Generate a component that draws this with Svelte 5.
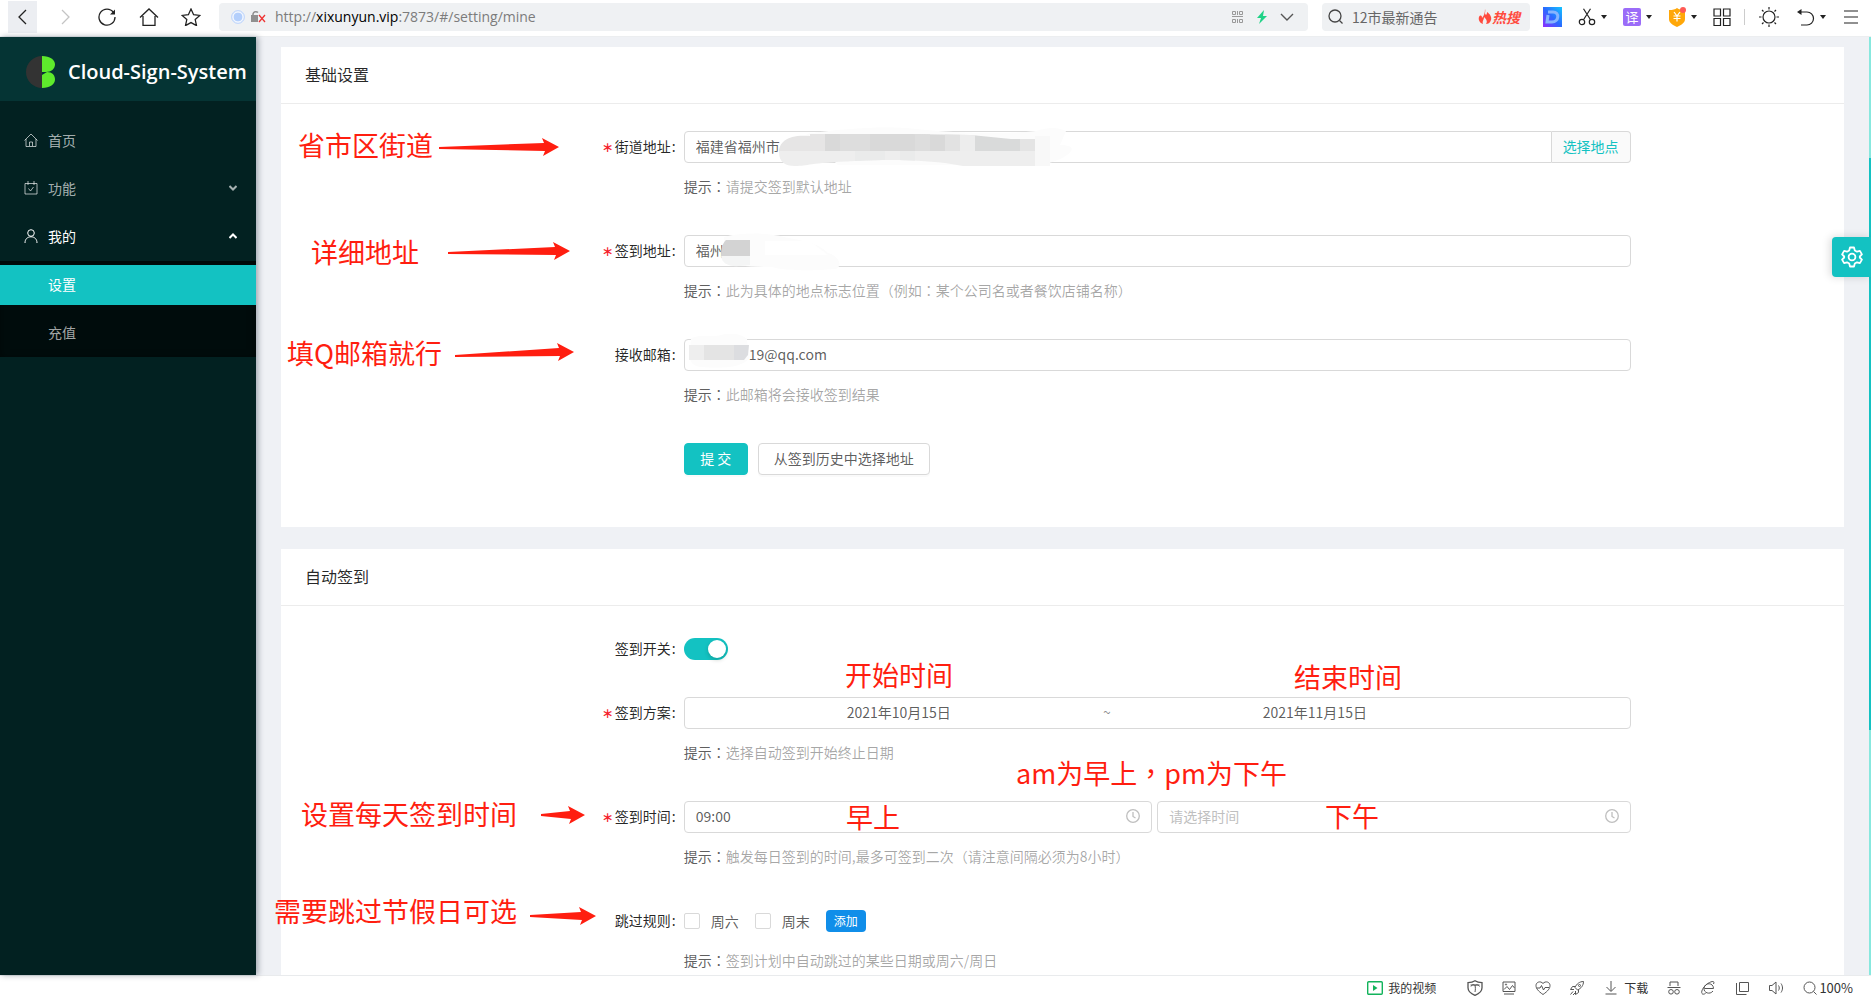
<script>
  let street = "福建省福州市";
  let place = "福州";
  let email = "19@qq.com";
  let enabled = true;
  let startDate = "2021年10月15日";
  let endDate = "2021年11月15日";
  let amTime = "09:00";
  let pmTime = "";
  let skipSat = false;
  let skipSun = false;
  let keyword = "";

  // positions are relative to the page area, beside and over the forms
  const notes = [
    { text: "省市区街道", x: 42, y: 90 },
    { text: "详细地址", x: 55, y: 197 },
    { text: "填Q邮箱就行", x: 31, y: 298 },
    { text: "开始时间", x: 589, y: 620 },
    { text: "结束时间", x: 1038, y: 622 },
    { text: "am为早上，pm为下午", x: 760, y: 718 },
    { text: "早上", x: 590, y: 762 },
    { text: "下午", x: 1069, y: 761 },
    { text: "设置每天签到时间", x: 45, y: 759 },
    { text: "需要跳过节假日可选", x: 18, y: 856 },
  ];

  const arrows = [
    { x: 183, y: 111, len: 120, dy: -1 },
    { x: 192, y: 216, len: 122, dy: -2 },
    { x: 199, y: 319, len: 119, dy: -4 },
    { x: 285, y: 778, len: 44, dy: 0 },
    { x: 274, y: 879, len: 66, dy: 0 },
  ];

  const arrowPath = ({ x, y, len, dy }) => {
    const tip = x + len;
    const ty = y + dy;
    return `M${x} ${y - 1} L${tip - 15} ${ty - 4} L${tip - 17} ${ty - 9} L${tip} ${ty} L${tip - 16} ${ty + 9} L${tip - 14} ${ty + 4} L${x} ${y + 1}Z`;
  };
</script>

<div class="browser">
  <header class="topbar">
    <nav class="nav" aria-label="浏览">
      <button class="nav-btn back" aria-label="后退">
        <svg width="18" height="18" viewBox="0 0 18 18"><path d="M12 2 5 9l7 7" /></svg>
      </button>
      <button class="nav-btn dim" aria-label="前进">
        <svg width="18" height="18" viewBox="0 0 18 18"><path d="m6 2 7 7-7 7" /></svg>
      </button>
      <button class="nav-btn" aria-label="刷新">
        <svg width="20" height="18" viewBox="0 0 20 18">
          <path d="M16.500 4.500A8 8 0 1 0 18 9" />
          <path d="M18 1.500v5h-5z" fill="#222" stroke="none" />
        </svg>
      </button>
      <button class="nav-btn" aria-label="主页">
        <svg width="20" height="18" viewBox="0 0 20 18"><path d="M1 9.500 10 1l9 8.500M4 8v9.500h12V8" /></svg>
      </button>
      <button class="nav-btn" aria-label="收藏">
        <svg width="20" height="18" viewBox="0 0 20 18">
          <path d="m10 1 2.600 5.700 6.200.700-4.600 4.200 1.300 6L10 14.600 4.500 17.600l1.300-6L1.200 7.400l6.200-.700z" />
        </svg>
      </button>
    </nav>
    <div class="address">
      <svg class="site" width="14" height="14" viewBox="0 0 14 14">
        <circle cx="7" cy="7" r="6.500" fill="#d6e5fd" stroke="#c4d8fa" />
        <circle cx="7" cy="7" r="5" fill="#b3cffc" stroke="#fff" />
      </svg>
      <svg class="lock" width="15" height="14" viewBox="0 0 15 14">
        <path d="M2 6V4a3 3 0 0 1 5-1.500" fill="none" stroke="#909090" stroke-width="1.500" />
        <path d="M0 5h7v7H0z" fill="#909090" />
        <path d="m8 5 6 7m0-7-6 7" stroke="#e33" stroke-width="1.300" />
      </svg>
      <p class="url">http://<b>xixunyun.vip</b>:7873/#/setting/mine</p>
      <svg width="12" height="12" viewBox="0 0 12 12" fill="none" stroke="#999">
        <path d="M.5.500h3v3h-3zM7.500.500h3v3h-3zM.5 8.500h3v3h-3zM7.500 8.500h3v3h-3zM5.500 0v4M0 5.500h11M5.500 8v4" />
      </svg>
      <svg width="12" height="14" viewBox="0 0 12 14"><path d="M8 0 1 8h4l-2 6 8-8H7z" fill="#1fd286" /></svg>
      <svg width="14" height="14" viewBox="0 0 14 14" fill="none" stroke="#555" stroke-width="1.400"><path d="m1 4 6 6 6-6" /></svg>
    </div>
    <div class="search">
      <svg width="16" height="16" viewBox="0 0 16 16" fill="none" stroke="#444" stroke-width="1.300">
        <circle cx="7" cy="7" r="6" /><path d="m11.500 11.500 3 3" />
      </svg>
      <input aria-label="搜索" placeholder="12市最新通告" bind:value={keyword} />
      <svg width="14" height="16" viewBox="0 0 14 16">
        <path d="M7 0c1 3-1 4 1 6 1-1 1-2 1-3 3 2 5 5 4 8s-3 4-5 4c2-3 0-5-2-7 0 3-2 4-1 7-3-1-5-4-4-7C2 6 4 6 4 9c2-2 3-5 3-9z" fill="#ff4b3e" />
      </svg>
      <strong>热搜</strong>
    </div>
    <div class="tools">
      <button class="tool" aria-label="文档">
        <svg width="19" height="20" viewBox="0 0 19 20">
          <defs>
            <linearGradient id="doc" x1="0" y1="1" x2="1" y2="0">
              <stop offset="0" stop-color="#8f2cff" /><stop offset=".5" stop-color="#2a6bff" /><stop offset="1" stop-color="#14c4ff" />
            </linearGradient>
          </defs>
          <path d="M0 0h19v20H0z" fill="url(#doc)" />
          <path d="M5 5h5c7 0 6 10-1 10H4l1-7" fill="none" stroke="#86b4ff" stroke-width="3" />
        </svg>
      </button>
      <button class="tool" aria-label="截图">
        <svg width="18" height="18" viewBox="0 0 18 18" fill="none" stroke="#222" stroke-width="1.200">
          <circle cx="4" cy="14" r="2.700" /><circle cx="14" cy="14" r="2.700" /><path d="m5.500 11.800 7-11M12.500 11.800l-7-11" />
        </svg>
        <i class="caret"></i>
      </button>
      <button class="tool" aria-label="翻译">
        <span class="translate">译</span>
        <i class="caret"></i>
      </button>
      <button class="tool" aria-label="优惠">
        <svg width="18" height="20" viewBox="0 0 18 20">
          <path d="M9 1c2 1.500 4 2 8 2v9c0 4-4 6-8 8-4-2-8-4-8-8V3c4 0 6-.5 8-2z" fill="#ffa708" />
          <path d="m6 5 3 4 3-4M5.500 9h7M5.500 11.500h7M9 9v5.500" fill="none" stroke="#fff" stroke-width="1.200" />
          <circle cx="15" cy="3" r="3" fill="#ff5a55" />
        </svg>
        <i class="caret"></i>
      </button>
      <button class="tool" aria-label="应用">
        <svg width="18" height="18" viewBox="0 0 18 18" fill="none" stroke="#222" stroke-width="1.200">
          <path d="M1 1h6.500v7H1zM10.500 1H17v7h-6.500zM1 10.500h6.500v7H1zM10.500 10.500H17v7h-6.500z" />
        </svg>
      </button>
    </div>
    <div class="tools extra">
      <button class="tool" aria-label="亮度">
        <svg width="20" height="20" viewBox="0 0 20 20" fill="none" stroke="#222" stroke-width="1.200">
          <circle cx="10" cy="10" r="6" />
          <path d="M10 0v2.500M10 17.500V20M0 10h2.500M17.500 10H20M3 3l1.500 1.500M15.500 15.500 17 17M3 17l1.500-1.500M15.500 4.500 17 3" />
        </svg>
      </button>
      <button class="tool" aria-label="恢复">
        <svg width="18" height="18" viewBox="0 0 18 18" fill="none" stroke="#222" stroke-width="1.200">
          <path d="M3 4h7a6.500 6.500 0 0 1 0 13H4" /><path d="M0 4l4.500-3v6z" fill="#222" stroke="none" />
        </svg>
        <i class="caret"></i>
      </button>
      <button class="tool" aria-label="菜单">
        <svg width="14" height="14" viewBox="0 0 14 14" stroke="#222" stroke-width="1.200"><path d="M0 1h14M0 7h14M0 13h14" /></svg>
      </button>
    </div>
  </header>

  <div class="main">
    <aside class="sider">
      <div class="logo">
        <svg width="30" height="32" viewBox="0 0 30 32">
          <path d="M16 0a16 16 0 0 0 0 32z" fill="#333" />
          <path d="M16 0c8 0 13 4 13 8.500S25 16 20 16h-4z" fill="#5eea2c" />
          <path d="M16 32c8 0 13-4 13-8.500S26 16 21 16l-5 3z" fill="#5eea2c" />
        </svg>
        <h1>Cloud-Sign-System</h1>
      </div>
      <ul class="menu">
        <li>
          <a href="#/home">
            <svg width="14" height="14" viewBox="0 0 14 14"><path d="M.5 7.500 7 1l6.500 6.500M2 6v7.500h10V6M5.500 13V9h3v4" /></svg>
            首页
          </a>
        </li>
        <li>
          <a href="#/feature">
            <svg width="14" height="14" viewBox="0 0 14 14"><path d="M1 2.500h12v10.500H1zM4 0v4M10 0v4M4.500 7.500l2 2.500 3-4" /></svg>
            功能
            <svg class="arrow" width="8" height="6" viewBox="0 0 8 6"><path d="m.5 1 3.500 3.500L7.500 1" stroke-width="2" /></svg>
          </a>
        </li>
        <li class="open">
          <a href="#/setting">
            <svg width="14" height="14" viewBox="0 0 14 14"><circle cx="7" cy="4" r="3.300" /><path d="M1 14c0-4 2.500-6.200 6-6.200s6 2.200 6 6.200" /></svg>
            我的
            <svg class="arrow" width="8" height="6" viewBox="0 0 8 6"><path d="M.5 5 4 1.500 7.500 5" stroke-width="2" /></svg>
          </a>
          <ul class="submenu">
            <li><a class="selected" href="#/setting/mine">设置</a></li>
            <li><a href="#/setting/recharge">充值</a></li>
          </ul>
        </li>
      </ul>
    </aside>

    <main class="page">
      <section class="card">
        <h2>基础设置</h2>
        <form class="form" on:submit|preventDefault>
          <div class="row">
            <label class="required" for="street">街道地址</label>
            <div class="control">
              <div class="group">
                <input id="street" class="input" bind:value={street} />
                <button type="button" class="addon">选择地点</button>
              </div>
              <svg class="mask street-mask" width="296" height="44" viewBox="0 0 296 44">
                <defs>
                  <clipPath id="stroke">
                    <path d="M32 10C10 8 1 16 1 26s6 14 16 14c14 0 12-3 60-5 40-2 60-1 90 2l18 3h72V13l-24 0-40-4-60-1H32z" />
                  </clipPath>
                </defs>
                <path d="M28 8c40-6 80-8 110-5 40 4 80 6 120 2 14-5 24-3 30 0l-6 14c16 0 14 6 4 12-8 5-20 8-40 8H60z" fill="#fcfcfc" />
                <g clip-path="url(#stroke)">
                  <path d="M0 8h47v17H0z" fill="#e6e5e5" />
                  <path d="M47 8h135v17H47z" fill="#d9d9d9" />
                  <path d="M62 8h15v17H62zM77 8h15v17H77zM137 8h15v17h-15z" fill="#dddddd" />
                  <path d="M167 8h30v17h-30z" fill="#e2e2e2" />
                  <path d="M182 8h15v17h-15z" fill="#ededed" />
                  <path d="M197 8h45v17h-45z" fill="#d9dada" />
                  <path d="M242 8h15v17h-15z" fill="#e4e4e4" />
                  <path d="M0 25h257v17H0z" fill="#eeeeee" />
                  <path d="M77 25h30v17H77zM122 25h15v17h-15z" fill="#eaebeb" />
                </g>
                <path d="M257 10h15v30h-15z" fill="#f8f8f8" />
              </svg>
            </div>
            <p class="hint"><span>提示<i>：</i></span>请提交签到默认地址</p>
          </div>
          <div class="row">
            <label class="required" for="place">签到地址</label>
            <div class="control">
              <input id="place" class="input" bind:value={place} />
              <svg class="mask place-mask" width="122" height="40" viewBox="0 0 122 40">
                <path d="M4 4c20-5 44-4 60 0 20 4 34 6 44 16 14 4 14 16 6 16-20 2-50 2-62-2-20 0-40 0-48-10z" fill="#fcfcfc" />
                <path d="M6 7h24v16H1c0-7 1-12 5-16z" fill="#d3d3d3" />
                <path d="M1 23h29v9l-10 1C8 34 2 30 1 23z" fill="#f4f5f5" />
                <path d="M45 8h45l18 14H45z" fill="#fff" />
              </svg>
            </div>
            <p class="hint"><span>提示<i>：</i></span>此为具体的地点标志位置（例如<i>：</i>某个公司名或者餐饮店铺名称）</p>
          </div>
          <div class="row">
            <label for="email">接收邮箱</label>
            <div class="control">
              <input id="email" class="input masked" bind:value={email} />
              <svg class="mask email-mask" width="62" height="36" viewBox="0 0 62 36">
                <path d="M3 4c12-4 20 0 30-3s20-1 26 4l2 20c-10 10-30 9-48 8-8 0-12-6-11-12z" fill="#fcfcfc" />
                <path d="M1 11h15v15H1z" fill="#eeeeee" />
                <path d="M16 11h30v15H16z" fill="#e4e4e4" />
                <path d="M46 11h15l-1 10-4 5H46z" fill="#dcdde0" />
              </svg>
            </div>
            <p class="hint"><span>提示<i>：</i></span>此邮箱将会接收签到结果</p>
          </div>
          <div class="row">
            <div class="control actions">
              <button class="btn primary">提 交</button>
              <button type="button" class="btn">从签到历史中选择地址</button>
            </div>
          </div>
        </form>
      </section>

      <section class="card last">
        <h2>自动签到</h2>
        <form class="form" on:submit|preventDefault>
          <div class="row short">
            <label for="enabled">签到开关</label>
            <div class="control">
              <input id="enabled" class="switch" type="checkbox" role="switch" aria-checked={enabled} bind:checked={enabled} />
            </div>
          </div>
          <div class="row">
            <label class="required" for="start">签到方案</label>
            <div class="control">
              <div class="input range">
                <input id="start" bind:value={startDate} />
                <span>~</span>
                <input aria-label="结束日期" bind:value={endDate} />
              </div>
            </div>
            <p class="hint"><span>提示<i>：</i></span>选择自动签到开始终止日期</p>
          </div>
          <div class="row">
            <label class="required" for="am">签到时间</label>
            <div class="control times">
              <div class="input time">
                <input id="am" placeholder="请选择时间" bind:value={amTime} />
                <svg width="14" height="14" viewBox="0 0 14 14"><circle cx="7" cy="7" r="6.300" /><path d="M7 3v4.500l2.500 1.500" /></svg>
              </div>
              <div class="input time">
                <input aria-label="下午时间" placeholder="请选择时间" bind:value={pmTime} />
                <svg width="14" height="14" viewBox="0 0 14 14"><circle cx="7" cy="7" r="6.300" /><path d="M7 3v4.500l2.500 1.500" /></svg>
              </div>
            </div>
            <p class="hint"><span>提示<i>：</i></span>触发每日签到的时间,最多可签到二次（请注意间隔必须为8小时）</p>
          </div>
          <div class="row">
            <label for="sat">跳过规则</label>
            <div class="control rules">
              <label class="check"><input id="sat" type="checkbox" bind:checked={skipSat} />周六</label>
              <label class="check"><input type="checkbox" bind:checked={skipSun} />周末</label>
              <button type="button" class="add">添加</button>
            </div>
            <p class="hint"><span>提示<i>：</i></span>签到计划中自动跳过的某些日期或周六/周日</p>
          </div>
        </form>
      </section>

      <div class="notes">
        <svg width="100%" height="100%">
          {#each arrows as arrow}
            <path d={arrowPath(arrow)} />
          {/each}
        </svg>
        {#each notes as note}
          <span style="left: {note.x}px; top: {note.y}px">
            {#each note.text.split(/(，)/) as part}{#if part === "，"}<i>{part}</i>{:else}{part}{/if}{/each}
          </span>
        {/each}
      </div>
    </main>

    <div class="scrollbar"><div class="thumb"></div></div>
    <button class="handle" aria-label="主题设置">
      <svg width="22" height="22" viewBox="0 0 22 22" fill="none" stroke="#fff" stroke-width="1.800" stroke-linejoin="round">
        <path d="M9 1.500h4l.8 2.900 2.200 1.300 2.900-.8 2 3.500-2.100 2.100v1l2.100 2.100-2 3.500-2.900-.8-2.200 1.300-.8 2.900H9l-.8-2.900L6 16.300l-2.900.8-2-3.500 2.100-2.100v-1L1.100 8.400l2-3.500 2.900.8 2.200-1.300z" />
        <circle cx="11" cy="11" r="3.400" />
      </svg>
    </button>
  </div>

  <footer class="statusbar">
    <button class="status video">
      <svg width="16" height="14" viewBox="0 0 16 14"><rect x=".7" y=".7" width="14.600" height="12.600" rx="1" stroke="#12b35b" stroke-width="1.400" /><path d="M6 4v6l4.500-3z" fill="#12b35b" stroke="none" /></svg>
      我的视频
    </button>
    <button class="status" aria-label="安全">
      <svg width="16" height="16" viewBox="0 0 16 16"><path d="M8 .7c2 1.300 4 1.800 7 2v5c0 4-3 6-7 7.700C4 13.700 1 11.700 1 7.700v-5c3-.2 5-.7 7-2z" stroke-width="1.300" /><path d="M4 6.500c.5-2 3-2.500 4-1 1.500-1.500 4-.5 4.500 1M3.500 5h9M8 5.500c.5 2 .5 4 0 6.500" /></svg>
    </button>
    <button class="status" aria-label="图片">
      <svg width="16" height="16" viewBox="0 0 16 16"><path d="M2 2h12v9.500H2zM3 14h10M3 9.500l3-3 2.500 3 3-4 2 2.500" /><circle cx="5" cy="4.500" r=".6" /></svg>
    </button>
    <button class="status" aria-label="健康">
      <svg width="16" height="16" viewBox="0 0 16 16"><path d="M8 14.500C3 11 1 8.500 1 5.500 1 2 5.500.5 8 3.500 10.500.5 15 2 15 5.500c0 3-2 5.500-7 9zM1.500 8H5l1.500-2.500L8.500 10 10 7.500h4" /></svg>
    </button>
    <button class="status" aria-label="加速">
      <svg width="16" height="16" viewBox="0 0 16 16"><path d="M14.500 1.500c-4 0-7 2.500-8.500 6l2.500 2.500c3.500-1.500 6-4.500 6-8.500zM6.500 6.500l-3 0-2 3h3.500M9.500 9.500v3l-3 2V11M4 11.500l-2.500 3M6 13l-2 2" /><circle cx="10.500" cy="5.500" r="1" /></svg>
    </button>
    <button class="status">
      <svg width="16" height="16" viewBox="0 0 16 16"><path d="M8 1v10M3.500 7 8 11.500 12.500 7M2.500 14h11" /></svg>
      下载
    </button>
    <button class="status" aria-label="无痕">
      <svg width="16" height="16" viewBox="0 0 16 16"><path d="M4 6V2h8v4M1.500 7.500h13" /><circle cx="5" cy="11.800" r="2.300" /><circle cx="11" cy="11.800" r="2.300" /></svg>
    </button>
    <button class="status" aria-label="兼容模式">
      <svg width="16" height="16" viewBox="0 0 16 16"><path d="M4.500 8.500h9c0-6-8.500-6.500-9.500-.5-.6 5 6 7 9 3M13.500 4c1.500-3-1-3-4-1.500C4.500 5 .5 11 2 13.500c.5 1 2 .8 3.500 0" /></svg>
    </button>
    <button class="status" aria-label="窗口">
      <svg width="16" height="16" viewBox="0 0 16 16"><path d="M5.500 2.500h9v9h-9zM2.500 3v11.500h10" /></svg>
    </button>
    <button class="status" aria-label="声音">
      <svg width="16" height="16" viewBox="0 0 16 16"><path d="M1.500 5.500v5H4l4 3.500V2L4 5.500zM10.500 5.500c1 1.500 1 3.500 0 5M13 3.500c2 3 2 6 0 9" /></svg>
    </button>
    <button class="status zoom">
      <svg width="16" height="16" viewBox="0 0 16 16"><circle cx="7.500" cy="7.500" r="5.500" /><path d="m11.500 11.500 3 3" /></svg>
      100%
    </button>
  </footer>
</div>

<style>
  :global(body) {
    font-family: "Noto Sans CJK SC", "Noto Sans", sans-serif;
    font-size: 14px;
    color: rgba(0, 0, 0, 0.65);
  }

  h1,
  h2,
  p,
  ul {
    margin: 0;
    padding: 0;
    list-style: none;
  }
  button,
  input {
    box-sizing: border-box;
    margin: 0;
    padding: 0;
    border: 0;
    background: none;
    font: inherit;
    color: inherit;
  }
  input {
    outline: none;
    min-width: 0;
  }
  button {
    cursor: pointer;
    white-space: nowrap;
  }
  a {
    color: inherit;
    text-decoration: none;
  }
  svg {
    flex: none;
  }

  .browser {
    display: flex;
    flex-direction: column;
    height: 100vh;
    overflow: hidden;
    background: #fff;
  }

  /* browser bar */
  .topbar {
    display: flex;
    align-items: center;
    box-sizing: border-box;
    height: 37px;
    padding: 0 13px 2px 8px;
    border-bottom: 1px solid #eceef0;
  }
  .nav {
    display: flex;
    gap: 13px;
    margin-right: 14px;
  }
  .nav-btn {
    display: flex;
    align-items: center;
    justify-content: center;
    width: 29px;
    height: 32px;
    fill: none;
    stroke: #222;
    stroke-width: 1.3;
  }
  .back {
    background: #eceef2;
  }
  .dim {
    stroke: #c4c4c4;
  }
  .address,
  .search {
    display: flex;
    align-items: center;
    box-sizing: border-box;
    height: 28px;
    border-radius: 4px;
    background: #eff1f3;
  }
  .address {
    flex: 1;
    gap: 12px;
    padding: 0 14px 0 12px;
  }
  .lock {
    margin-left: -6px;
  }
  .url {
    flex: 1;
    margin-left: -3px;
    font-family: "Open Sans", "Noto Sans", sans-serif;
    font-size: 14px;
    line-height: 20px;
    color: #7c7c7c;
  }
  .url b {
    font-weight: 400;
    color: #000;
  }
  .search {
    width: 208px;
    margin: 0 13px 0 14px;
    padding: 0 10px 0 6px;
    color: #666;
  }
  .search input {
    flex: 1;
    margin-left: 8px;
  }
  .search input::placeholder {
    color: #666;
  }
  .search strong {
    font-style: italic;
    color: #ff4b3e;
  }
  .tools {
    display: flex;
    align-items: center;
    gap: 16px;
  }
  .tool {
    display: flex;
    align-items: center;
    gap: 5px;
  }
  .extra {
    gap: 18px;
    height: 16px;
    margin-left: 13px;
    padding-left: 14px;
    border-left: 1px solid #ccc;
  }
  .caret {
    border: 3px solid transparent;
    border-top: 4px solid #222;
    border-bottom: 0;
  }
  .translate {
    width: 18px;
    border-radius: 2px;
    background: #9b6cf8;
    color: #fff;
    font-size: 13px;
    line-height: 18px;
  }

  .main {
    position: relative;
    display: flex;
    flex: 1;
    min-height: 0;
    background: #eff1f5;
  }

  /* side menu */
  .sider {
    position: relative;
    z-index: 1;
    width: 256px;
    flex: none;
    background: #022121;
    color: rgba(255, 255, 255, 0.65);
    box-shadow: 2px 0 6px rgba(0, 21, 41, 0.35);
  }
  .logo {
    display: flex;
    align-items: center;
    gap: 12px;
    box-sizing: border-box;
    height: 64px;
    padding: 5px 0 0 26px;
    background: #053434;
  }
  .logo h1 {
    font-family: "Open Sans", "Noto Sans", sans-serif;
    font-size: 20px;
    font-weight: 600;
    line-height: 28px;
    color: #fff;
    white-space: nowrap;
  }
  .menu {
    padding-top: 16px;
  }
  .menu a {
    display: flex;
    align-items: center;
    gap: 10px;
    box-sizing: border-box;
    height: 40px;
    margin: 4px 0;
    padding: 0 19px 2px 24px;
    line-height: 20px;
  }
  .menu li {
    display: flow-root;
  }
  .menu svg {
    fill: none;
    stroke: currentColor;
  }
  .menu .arrow {
    margin-left: auto;
  }
  .open > a {
    color: #fff;
  }
  .submenu {
    background: #000c0c;
    box-shadow: inset 0 2px 8px rgba(0, 0, 0, 0.45);
  }
  .submenu a {
    padding-left: 48px;
  }
  .submenu .selected {
    background: #13c2c2;
    color: #fff;
  }

  /* page */
  .page {
    position: relative;
    display: flex;
    flex: 1;
    flex-direction: column;
    gap: 22px;
    min-width: 0;
    overflow: hidden;
    padding: 10px 25px 0;
  }
  .card {
    background: #fff;
  }
  .last {
    flex: 1 0 auto;
  }
  .card h2 {
    padding: 15px 24px 17px;
    border-bottom: 1px solid #ececec;
    font-size: 16px;
    font-weight: 400;
    line-height: 24px;
    color: rgba(0, 0, 0, 0.85);
  }
  .form {
    padding: 27px 24px 15px;
  }
  .row {
    display: grid;
    grid-template-columns: 6fr 15fr 3fr;
    margin-bottom: 37px;
  }
  .row.short {
    margin-bottom: 32px;
  }
  .row > label {
    padding-right: 8px;
    text-align: right;
    line-height: 30px;
    color: rgba(0, 0, 0, 0.85);
  }
  .row > label::after {
    content: ":";
    margin-left: 1px;
  }
  .required::before {
    content: "∗";
    margin-right: 1px;
    font-family: "DejaVu Sans", sans-serif;
    color: #f5222d;
  }
  .control {
    position: relative;
    grid-column: 2;
    min-height: 32px;
  }
  .hint {
    grid-column: 2;
    margin-top: 11px;
    line-height: 24px;
    color: rgba(0, 0, 0, 0.35);
  }
  .hint span {
    color: rgba(0, 0, 0, 0.65);
  }
  .hint i,
  .notes i {
    font-family: "Noto Sans CJK TC", sans-serif;
    font-style: normal;
  }
  .input {
    box-sizing: border-box;
    width: 100%;
    height: 32px;
    padding: 0 11px 2px;
    border: 1px solid #d9d9d9;
    border-radius: 4px;
    background: #fff;
  }
  .masked {
    padding-left: 64px;
  }
  .group {
    display: flex;
  }
  .group .input {
    flex: 1;
    border-radius: 4px 0 0 4px;
  }
  .addon {
    height: 32px;
    padding: 0 11px 2px;
    border: 1px solid #d9d9d9;
    border-left: 0;
    border-radius: 0 4px 4px 0;
    background: #fafafa;
    color: #13c2c2;
  }
  .mask {
    position: absolute;
    pointer-events: none;
  }
  .street-mask {
    left: 94px;
    top: -5px;
  }
  .place-mask {
    left: 36px;
    top: -2px;
  }
  .email-mask {
    left: 4px;
    top: -5px;
  }
  .actions {
    display: flex;
    gap: 10px;
  }
  .btn {
    min-width: 64px;
    height: 32px;
    padding: 0 15px 2px;
    border: 1px solid #d9d9d9;
    border-radius: 4px;
    background: #fff;
    box-shadow: 0 2px 0 rgba(0, 0, 0, 0.02);
  }
  .primary {
    border-color: #13c2c2;
    background: #13c2c2;
    color: #fff;
  }
  .switch {
    appearance: none;
    display: block;
    width: 44px;
    height: 22px;
    margin: 5px 0;
    padding: 2px;
    border-radius: 11px;
    background: #bfbfbf;
  }
  .switch::before {
    content: "";
    display: block;
    width: 18px;
    height: 18px;
    border-radius: 50%;
    background: #fff;
    box-shadow: 0 2px 4px rgba(0, 35, 11, 0.2);
  }
  .switch:checked {
    background: #13c2c2;
  }
  .switch:checked::before {
    margin-left: auto;
  }
  .range,
  .time {
    display: flex;
    align-items: center;
  }
  .range input {
    width: 44%;
    text-align: center;
  }
  .range span {
    width: 10px;
    text-align: center;
    color: rgba(0, 0, 0, 0.45);
  }
  .times {
    display: grid;
    grid-template-columns: 99fr 100fr;
    gap: 5px;
  }
  .time input {
    flex: 1;
  }
  .time input::placeholder {
    color: #bfbfbf;
  }
  .time svg {
    fill: none;
    stroke: #bfbfbf;
    stroke-width: 1.3;
  }
  .rules {
    display: flex;
    align-items: center;
    gap: 16px;
  }
  .check {
    display: flex;
    align-items: center;
    gap: 11px;
  }
  .check input {
    appearance: none;
    width: 16px;
    height: 16px;
    border: 1px solid #d9d9d9;
    border-radius: 2px;
  }
  .check input:checked {
    border-color: #13c2c2;
    background: #13c2c2;
  }
  .add {
    height: 22px;
    padding: 0 8px;
    border-radius: 4px;
    background: #108ee9;
    color: #fff;
    font-size: 12px;
    line-height: 22px;
  }

  /* red notes over the forms */
  .notes {
    position: absolute;
    inset: 0;
    pointer-events: none;
    font-size: 27px;
    line-height: 36px;
    color: #ff1e10;
  }
  .notes svg {
    fill: #ff1e10;
  }
  .notes span {
    position: absolute;
    white-space: nowrap;
  }

  .scrollbar {
    width: 2px;
    padding-top: 121px;
    background: #87e8de;
  }
  .thumb {
    height: 70%;
    background: #13c2c2;
  }
  .handle {
    position: absolute;
    top: 200px;
    right: 0;
    display: flex;
    align-items: center;
    justify-content: center;
    width: 39px;
    height: 40px;
    border-radius: 4px 0 0 4px;
    background: #13c2c2;
    box-shadow: -2px 0 8px rgba(0, 0, 0, 0.15);
  }

  .statusbar {
    display: flex;
    align-items: center;
    justify-content: flex-end;
    gap: 18px;
    box-sizing: border-box;
    height: 25px;
    padding-right: 18px;
    border-top: 1px solid #e9ebed;
    font-size: 12px;
    line-height: 18px;
    color: #333;
  }
  .status {
    display: flex;
    align-items: center;
    gap: 5px;
  }
  .status svg {
    fill: none;
    stroke: #555;
  }
  .video {
    margin-right: 13px;
  }
  .zoom {
    gap: 1px;
    font-size: 13px;
  }
</style>
